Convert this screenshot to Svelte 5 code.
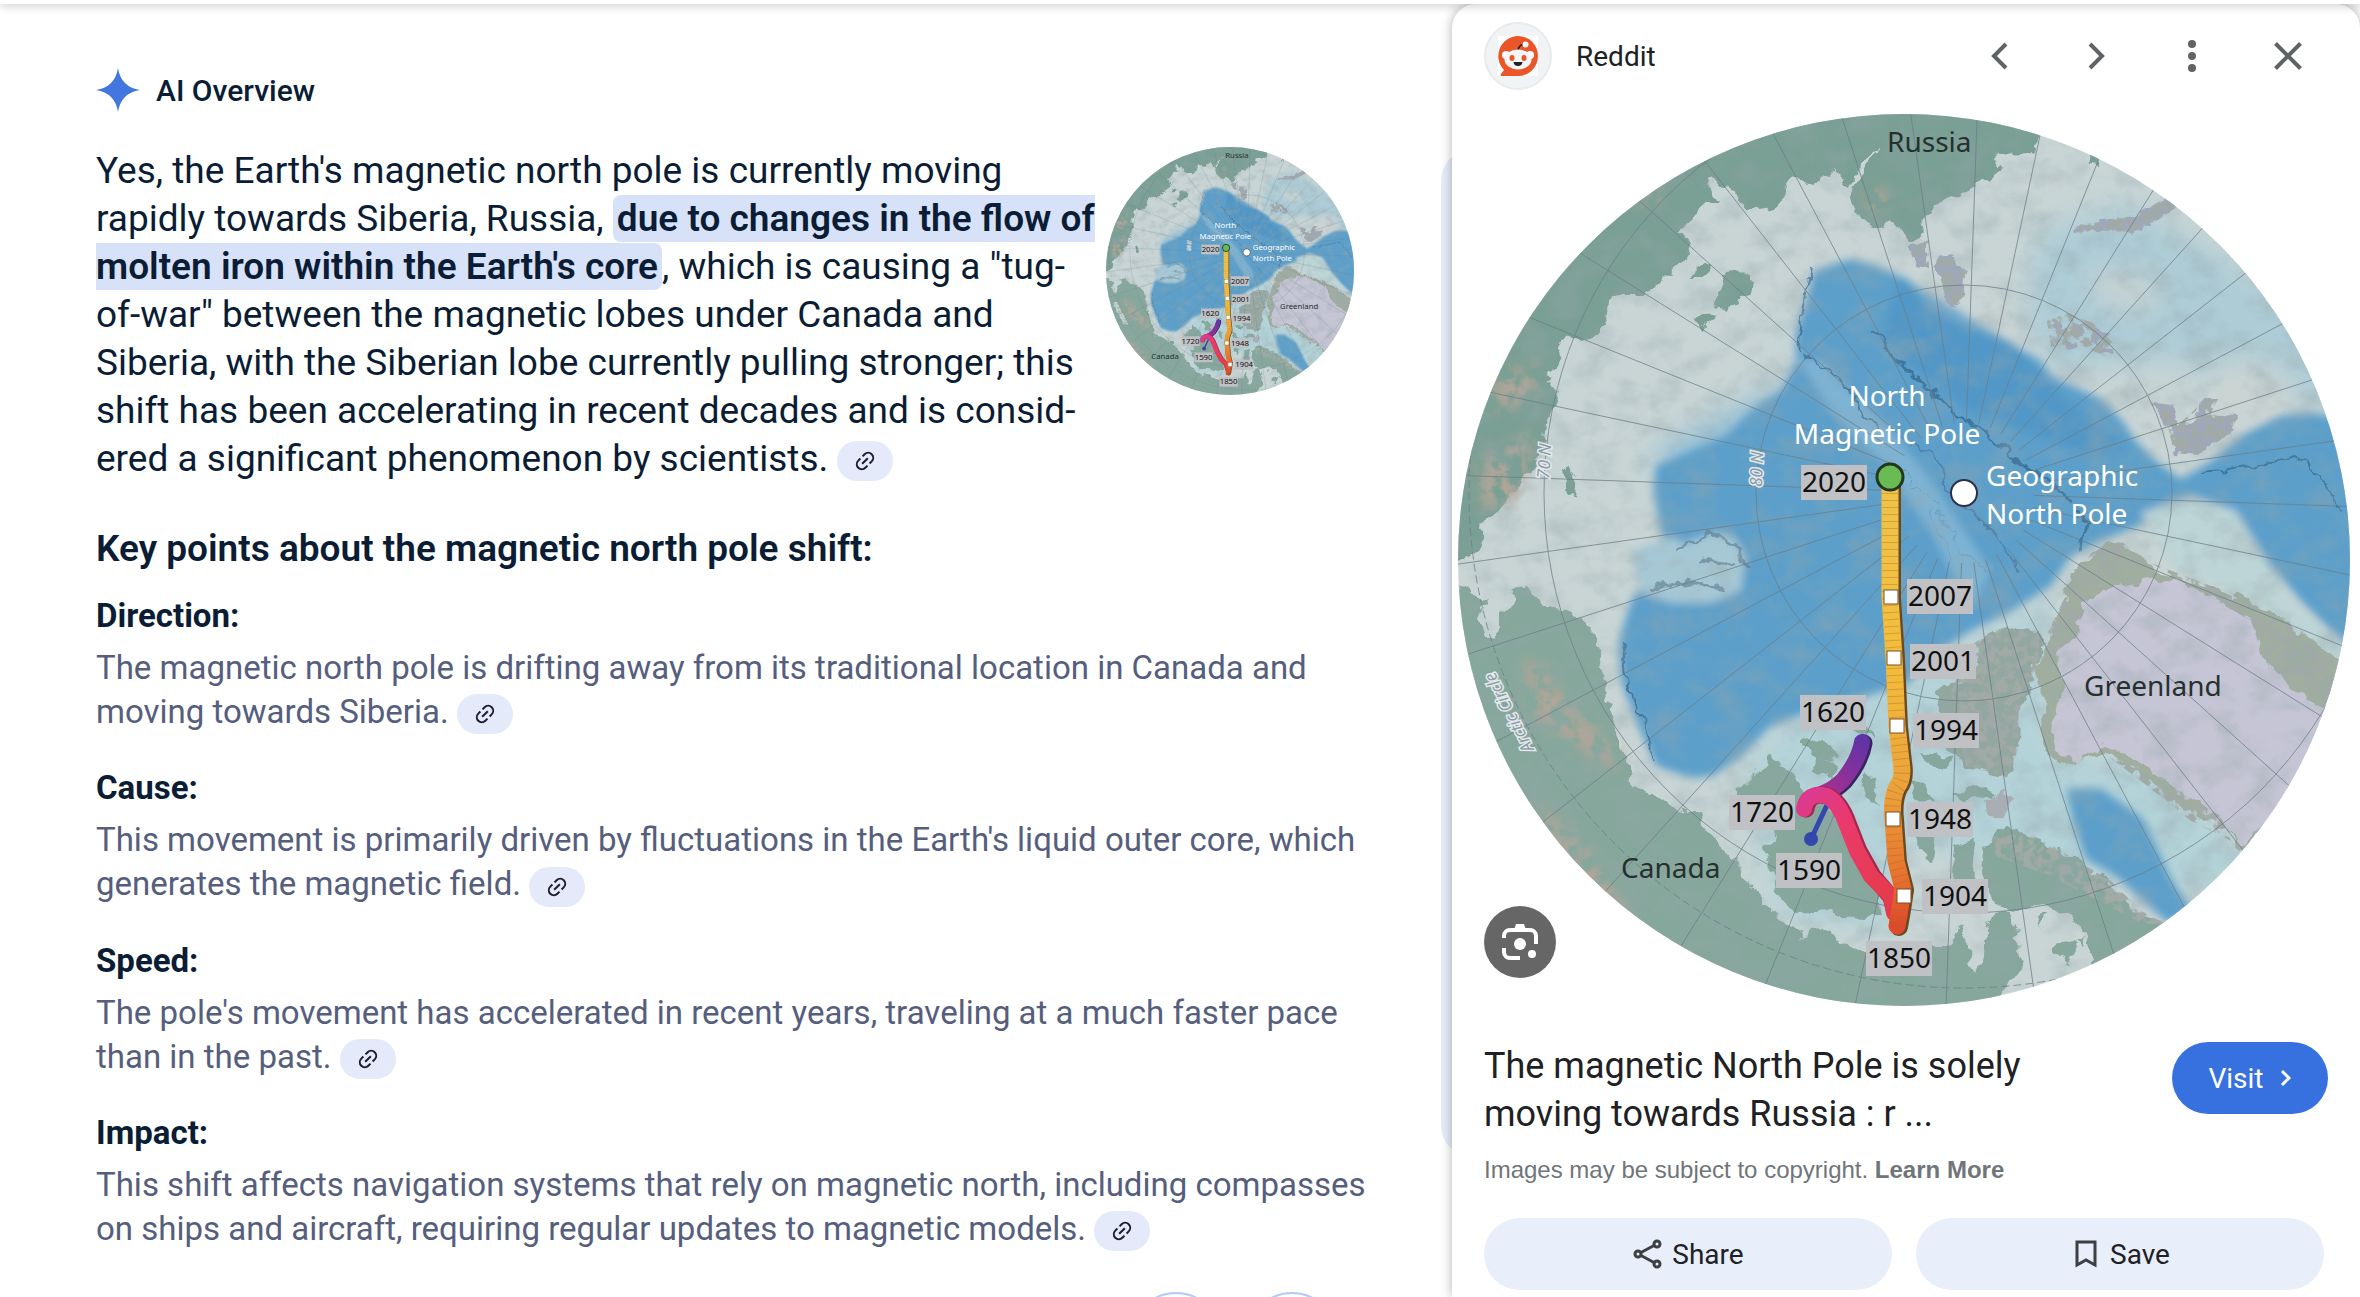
<script lang="ts">
  type Point = { title: string, text: string }

  const points: Point[] = [
    { title: 'Direction:', text: 'The magnetic north pole is drifting away from its traditional location in Canada and moving towards Siberia.' },
    { title: 'Cause:', text: "This movement is primarily driven by fluctuations in the Earth's liquid outer core, which generates the magnetic field." },
    { title: 'Speed:', text: "The pole's movement has accelerated in recent years, traveling at a much faster pace than in the past." },
    { title: 'Impact:', text: 'This shift affects navigation systems that rely on magnetic north, including compasses on ships and aircraft, requiring regular updates to magnetic models.' },
  ]

  // top left corner of each year tag, in map units
  const years = [
    { label: '2020', x: 350, y: 354 },
    { label: '2007', x: 456, y: 468 },
    { label: '2001', x: 459, y: 533 },
    { label: '1994', x: 462, y: 602 },
    { label: '1948', x: 456, y: 691 },
    { label: '1904', x: 471, y: 768 },
    { label: '1850', x: 415, y: 830 },
    { label: '1590', x: 325, y: 742 },
    { label: '1720', x: 278, y: 684 },
    { label: '1620', x: 349, y: 584 },
  ]
  const stops = [[440, 486], [443, 547], [446, 615], [442, 708], [453, 785]]

  const pole = { x: 513, y: 382 }
  const meridians = Array.from({ length: 36 }, (_, i) => {
    const a = ((i * 10 + 2) * Math.PI) / 180
    return {
      x1: pole.x + 70 * Math.cos(a), y1: pole.y + 70 * Math.sin(a),
      x2: pole.x + 620 * Math.cos(a), y2: pole.y + 620 * Math.sin(a),
    }
  })

  const track = 'M439 375V486L443 547L446 615L450 650Q453 668 446 676Q440 688 442 708L445 750L452 778L449 798L446 815'
</script>

{#snippet cite()}
  <button class="cite" aria-label="Show sources">
    <svg viewBox="0 0 24 24" width="24" height="24" fill="none" stroke="currentColor" stroke-width="2">
      <g transform="rotate(-45 12 12)">
        <path d="M10.500 7H7.500a5 5 0 0 0 0 10h3M13.500 7h3a5 5 0 0 1 0 10h-3M8 12h8" />
      </g>
    </svg>
  </button>
{/snippet}

<div class="page">
  <div class="topbar"></div>

  <main>
    <div class="brand">
      <svg viewBox="0 0 44 44" width="44" height="44" fill="#4377e0"><path d="M22 0Q25 19 44 22Q25 25 22 44Q19 25 0 22Q19 19 22 0Z" /></svg>
      <span>AI Overview</span>
    </div>

    <div class="summary">
      <p>
        Yes, the Earth's magnetic north pole is currently moving<br>
        rapidly towards Siberia, Russia, <mark>due to changes in the flow of<br>molten iron within the Earth's core</mark>, which is causing a "tug-<br>of-war" between the magnetic lobes under Canada and<br>
        Siberia, with the Siberian lobe currently pulling stronger; this<br>
        shift has been accelerating in recent decades and is consid-<br>ered a significant phenomenon by scientists.
        {@render cite()}
      </p>
      <svg class="thumb" viewBox="7 3 892 892" role="img" aria-label="Map of the pole track"><use href="#polar-map" /></svg>
    </div>

    <h2>Key points about the magnetic north pole shift:</h2>
    {#each points as p (p.title)}
      <section>
        <h3>{p.title}</h3>
        <p>{p.text} {@render cite()}</p>
      </section>
    {/each}

    <div class="feedback">
      <button aria-label="Good response"></button>
      <button aria-label="Bad response"></button>
    </div>
  </main>

  <div class="side">
    <div class="card-edge"></div>
    <aside>
      <header>
        <span class="logo">
          <svg viewBox="0 0 40 40" width="40" height="40">
            <rect width="40" height="40" fill="#fff" />
            <path d="M20 0a20 20 0 1 1 0 40H3q-1-1 0-2l3-4A20 20 0 0 1 20 0Z" fill="#ec5528" />
            <path d="M20 14q1-5 6-6" fill="none" stroke="#222" stroke-width="1.500" />
            <circle cx="27.500" cy="8.500" r="3" fill="#fff" />
            <circle cx="8" cy="19" r="4" fill="#fff" />
            <circle cx="32" cy="19" r="4" fill="#fff" />
            <ellipse cx="20" cy="23.500" rx="13.500" ry="10" fill="#f4f6f8" />
            <ellipse cx="14" cy="22" rx="2.500" ry="3" fill="#ec5528" />
            <ellipse cx="26" cy="22" rx="2.500" ry="3" fill="#ec5528" />
            <path d="M15.500 26h9q-.5 4-4.500 4t-4.500-4Z" fill="#1b2226" />
          </svg>
        </span>
        <span class="site">Reddit</span>
        <nav>
          <button aria-label="Previous image">
            <svg viewBox="0 0 48 48" width="48" height="48"><path d="M30 12L18 24L30 36" /></svg>
          </button>
          <button aria-label="Next image">
            <svg viewBox="0 0 48 48" width="48" height="48"><path d="M18 12L30 24L18 36" /></svg>
          </button>
          <button aria-label="More actions">
            <svg class="dots" viewBox="0 0 48 48" width="48" height="48"><circle cx="24" cy="12" r="4" /><circle cx="24" cy="24" r="4" /><circle cx="24" cy="36" r="4" /></svg>
          </button>
          <button aria-label="Close">
            <svg viewBox="0 0 48 48" width="48" height="48"><path d="M11.500 11.500L36.500 36.500M36.500 11.500L11.500 36.500" /></svg>
          </button>
        </nav>
      </header>

      <figure>
        <svg class="map" viewBox="7 3 892 892" role="img" aria-label="Map of the magnetic north pole from 1590 to 2020">
          <defs>
            <clipPath id="globe"><circle cx="453" cy="449" r="446" /></clipPath>
            <filter id="coast" x="-5%" y="-5%" width="110%" height="110%">
              <feTurbulence type="fractalNoise" baseFrequency="0.060" numOctaves="3" seed="4" />
              <feDisplacementMap in="SourceGraphic" scale="16" xChannelSelector="R" yChannelSelector="G" />
            </filter>
            <filter id="soft" x="-5%" y="-5%" width="110%" height="110%"><feGaussianBlur stdDeviation="4" /></filter>
            <filter id="haze" x="-10%" y="-10%" width="120%" height="120%"><feGaussianBlur stdDeviation="14" /></filter>
            <filter id="grain" x="0" y="0" width="100%" height="100%">
              <feTurbulence type="fractalNoise" baseFrequency="0.030 0.040" numOctaves="5" seed="9" result="n" />
              <feColorMatrix in="n" values="0 0 0 0 0.300  0 0 0 0 0.380  0 0 0 0 0.400  0.900 0 0 0 -0.380" />
              <feComposite operator="in" in2="SourceGraphic" />
            </filter>
            <filter id="rock" x="-10%" y="-10%" width="120%" height="120%">
              <feTurbulence type="fractalNoise" baseFrequency="0.110" numOctaves="3" seed="2" result="n" />
              <feColorMatrix in="n" values="0 0 0 0 0.360  0 0 0 0 0.400  0 0 0 0 0.380  0 6 0 0 -2.500" />
              <feComposite operator="in" in2="SourceGraphic" />
            </filter>
            <filter id="hills" x="-10%" y="-10%" width="120%" height="120%">
              <feGaussianBlur in="SourceGraphic" stdDeviation="8" result="b" />
              <feTurbulence type="fractalNoise" baseFrequency="0.070" numOctaves="4" seed="6" result="n" />
              <feColorMatrix in="n" values="0 0 0 0 0.450  0 0 0 0 0.380  0 0 0 0 0.310  0 4 0 0 -1.400" />
              <feComposite operator="in" in2="b" />
            </filter>
            <linearGradient id="track" gradientUnits="userSpaceOnUse" x1="0" y1="375" x2="0" y2="815">
              <stop offset="0" stop-color="#efc24a" />
              <stop offset=".4" stop-color="#f3bd3c" />
              <stop offset=".7" stop-color="#eba03a" />
              <stop offset=".88" stop-color="#e8742f" />
              <stop offset="1" stop-color="#dd4a2b" />
            </linearGradient>
            <linearGradient id="old" gradientUnits="userSpaceOnUse" x1="412" y1="630" x2="372" y2="684">
              <stop offset="0" stop-color="#6233a6" />
              <stop offset="1" stop-color="#a8308f" />
            </linearGradient>
            <linearGradient id="mid" gradientUnits="userSpaceOnUse" x1="353" y1="690" x2="442" y2="800">
              <stop offset="0" stop-color="#dc3a8c" />
              <stop offset=".3" stop-color="#ea3a6c" />
              <stop offset="1" stop-color="#e53b47" />
            </linearGradient>
          </defs>

          <g id="polar-map" clip-path="url(#globe)">
            <rect width="910" height="900" fill="#c9d5d5" />
            <g filter="url(#haze)">
              <path d="M590 120L680 90L860 200L900 300L800 290L720 250L600 260L570 200Z" fill="#adccd6" />
              <path d="M290 660L340 600L470 560L600 480L600 640L700 650L860 800L600 760L450 730L440 820L330 810Z" fill="#b3d3d9" />
              <path d="M760 260q40-20 70 0t-10 50h-70zM640 160l70 10-10 30-60-15zM550 180l20 0 0 40-40 0z" fill="#cbd4d3" />
              <path d="M205 340L340 270L350 170L330 330L240 440Z" fill="#8fbdd6" />
            </g>
            <g filter="url(#soft)">
              <path
                d="M363 160L400 148L425 155L455 168L475 195L510 215L555 230L590 250L600 265L650 288L670 308L685 330L705 350L730 368L760 350L790 325L830 305L860 302L910 310V545L880 520L850 490L820 455L800 430L785 405L750 398L700 410L650 430L620 445L600 475L560 500L520 520L480 545L458 572L400 590L360 600L320 615L290 645L262 665L240 667L205 655L185 610L170 570L168 530L180 490L195 470L220 450L210 420L203 380L205 355L240 340L275 325L300 300L330 280L345 250L345 220L355 190Z"
                fill="#5b9fca"
              />
              <path d="M616 678L650 678L675 695L692 708L705 735L720 768L742 800L717 812L690 788L665 765L635 748L622 710Z" fill="#5b9fca" />
              <path d="M345 245L370 250L400 280L440 320L480 370L500 400L540 460L520 500L480 420L430 350L380 300Z" fill="#86b8d6" opacity=".8" />
              <path d="M450 165L560 232L610 285L680 340L640 345L520 300L430 230Z" fill="#4d94c6" opacity=".7" />
              <path d="M180 440L222 425L232 433L262 421L282 425L295 445L290 480L260 492L220 492L190 482Z" fill="#a6c8d5" />
              <path d="M690 402L740 385L785 400L815 450L840 490L900 540L880 560L800 490L720 455Z" fill="#bdd5d7" />
            </g>
            <g filter="url(#coast)" fill="none" stroke="#2f6187" opacity=".65">
              <path d="M425 218L440 240L460 262L485 285L515 310L540 325L560 345L590 365L620 392" stroke-width="3" />
              <path d="M460 330L485 345L495 375L525 405L550 430L570 460" stroke-width="2" stroke="#4b6f93" />
              <path d="M440 350L480 390L520 450L560 480M480 400L500 450M530 420L560 465M460 440L480 500" stroke="#6c94b3" />
              <path d="M750 362L800 356L845 345L870 365L890 400" stroke-width="2" />
              <path d="M350 245L390 265L410 300L430 322" stroke-width="2" />
              <path d="M225 438L262 422L285 435L295 460M200 478L240 470L275 480M250 450L285 455" stroke-width="3" stroke="#5f7f93" />
              <path d="M170 530L175 570L190 610L205 650M360 160L352 200L347 240" stroke-width="2" />
              <path d="M620 400L640 410L625 440" stroke-width="3" />
            </g>

            <g filter="url(#coast)">
              <path
                d="M590 0L584 42L548 43L543 52L552 58L540 65L525 77L500 87L484 95L476 105L468 122L460 132L455 128L446 112L440 108L432 117L420 117L408 108L402 93L400 85L404 74L410 62L427 36L415 45L406 55L400 70L392 63L385 60L375 68L360 71L345 67L333 72L335 85L325 96L308 100L297 95L287 83L275 78L262 68L257 70L265 92L250 92L244 105L237 114L226 120L233 128L239 140L237 147L228 153L215 165L202 178L190 183L170 183L160 188L157 205L148 222L138 228L122 225L113 230L108 245L98 270L105 285L98 310L93 340L85 350L70 370L55 390L42 405L28 415L33 425L28 440L15 448L-20 465V-20Z"
                fill="#7a9f94"
              />
              <path d="M242 156l12-4 6 6-8 8h-12zM275 165l18-4 10 10-2 12-14 6-10 12-12-4 2-12zM245 208l14-6 6 4-16 12zM112 360l10-3 5 10-3 20-8-4zM395 67l8 2-3 8-6-3zM637 48l10 0 0 7-9-1z" fill="#7a9f94" />
              <path
                d="M-10 465L20 480L33 495L28 508L35 525L42 530L48 515L48 503L58 495L63 478L78 475L83 488L98 495L115 498L132 510L145 525L148 550L155 575L157 600L163 615L172 640L180 665L182 680L210 686L235 700L250 702L252 715L262 725L272 735L283 748L290 765L305 780L313 792L325 805L345 814L350 830L358 820L375 815L385 830L400 838L420 840L440 850L480 835L500 835L510 815L515 830L520 850L525 862L533 845L535 820L545 800L560 805L568 820L565 840L572 850L560 870L540 900H-10Z"
                fill="#86a79c"
              />
              <path d="M320 646L345 660L350 680L385 700L395 735L425 765L432 805L410 812L380 800L345 802L328 790L325 770L312 740L325 725L300 690L286 680Z" fill="#86a79c" />
              <path d="M535 735L545 720L565 718L585 725L600 738L630 750L655 768L670 790L690 807L720 817L690 845L645 855L635 825L610 800L590 792L560 802L540 785L530 760Z" fill="#86a79c" />
              <path d="M350 625l25 5 15 12-10 10-30-14zM365 645l20 10-4 14-20-10zM410 660l15 10 5 25-15-8zM470 640l14 4 18 2-6 12-22-6zM465 720l20 2-4 30-14-12zM505 735l20-6-5 40-18 8zM395 610l20 5 8 12-16-4zM455 670l20 8 6 14-18-6zM500 680l35-5 10 8-30 10z" fill="#86a79c" />
              <path d="M606 832l14-4 4 14-6 10-12-6zM586 806l8-4-4 14zM622 828l10 0-2 6z" fill="#86a79c" />
              <path d="M522 533L545 518L588 520L588 545L578 580L568 600L567 640L555 665L540 662L515 655L490 632L485 580L500 572L528 568Z" fill="#92a79f" />
              <path d="M535 690l15-10 12 12-8 16-18-4z" fill="#a9aeb4" />
              <path
                d="M612 490L622 462L650 436L670 430L690 446L715 465L760 475L800 490L840 515L870 535L910 560L900 640L790 740L770 712L740 700L710 680L680 655L655 642L630 648L610 655L595 640L588 610L597 590L585 570L590 540L605 520Z"
                fill="#9fae9f"
              />
              <path d="M632 492L660 475L700 468L730 472L770 490L805 515L812 548L840 575L885 605L850 680L792 734L760 705L715 670L675 643L650 634L625 650L608 642L600 620L605 600L614 570L602 545L625 525Z" fill="#c6c5d5" />
            </g>

            <g filter="url(#coast)" fill="#9fa8bb">
              <path d="M622 121l8-8 30-3 30-8 35-22 15 6-40 28-20 7-40-2-12 5z" />
              <path d="M458 137l20-8 0 28-14-4zM484 149l16-2 14 16-1 22-10 10-12-22z" />
              <path d="M702 292l18 2 5 22 30-12 32 2-10 18-30 20-24-2-6-26zM742 304l14-16 8 2-14 20z" />
              <path d="M600 214l8-4 6 6-8 6zM618 212l12 0 4 10-12 4zM640 220l14 2-2 10-12-2zM612 230l14-2 2 8-12 4zM644 238l14-2 2 10zM630 228l8 2-2 8z" />
            </g>
            <g filter="url(#rock)">
              <path d="M622 121l8-8 30-3 30-8 35-22 15 6-40 28-20 7-40-2-12 5z" />
              <path d="M458 137l20-8 0 28-14-4zM484 149l16-2 14 16-1 22-10 10-12-22zM596 210l20-8 26 10 20 20-6 14-32-14-24 4z" />
              <path d="M522 533L545 518L588 520L588 545L568 600L567 640L555 665L515 655L500 580ZM612 490L640 442L670 430L690 446L640 480L625 525L600 545L588 540ZM700 452L760 475L840 515L880 550L890 600L840 570L812 545L800 510ZM650 640L710 670L770 705L780 730L740 710L690 670ZM540 722L585 725L660 770L690 800L720 815L690 812L600 765L545 745Z" />
              <path d="M702 292l18 2 5 22 30-28 12 0-8 16 28 2-10 18-30 20-24-2-6-26z" />
            </g>
            <g filter="url(#hills)">
              <path d="M70 545L95 560L125 600L170 640L165 660L110 625L80 600ZM85 690L130 730L185 810L150 800L95 740ZM30 350L85 320L65 390L30 400ZM40 270L90 250L80 290L45 300ZM180 85l30-15-5 25zM412 80l22-2 4 18-20 4z" />
            </g>
            <g filter="url(#grain)"><rect width="910" height="900" /></g>

            <g class="grid">
              {#each meridians as m}
                <line {...m} />
              {/each}
              <circle cx={pole.x} cy={pole.y} r="208" />
              <circle cx={pole.x} cy={pole.y} r="420" />
              <circle cx={pole.x} cy={pole.y} r="495" stroke-dasharray="8 4" />
            </g>

            <g class="grid-label">
              <text transform="translate(98 368) rotate(-86)">70 N</text>
              <text transform="translate(311 376) rotate(-88)">80 N</text>
              <text transform="translate(83 638) rotate(-117)">Arctic Circle</text>
            </g>

            <g fill="none" stroke-linecap="round" stroke-linejoin="round">
              <path d="M392 678L376 694L361 726" stroke="#3348ac" stroke-width="5" />
              <circle cx="360" cy="728" r="7" fill="#3348ac" />
              <path d="M413 632Q410 650 394 670Q384 680 372 684" stroke="#3a2460" stroke-width="17" />
              <path d="M411 631Q408 649 392 669Q382 679 370 683" stroke="url(#old)" stroke-width="16" />
              <path d="M355 698Q358 680 378 685Q390 692 397 712L408 740L422 765L440 786L444 802" stroke="#a3264b" stroke-width="17" />
              <path d="M353 698Q356 680 376 685Q388 692 395 712L406 740L420 765L440 785L443 802" stroke="url(#mid)" stroke-width="16" />
              <path d={track} stroke="#6b4a22" stroke-width="18" transform="translate(2 1)" />
              <path d={track} stroke="url(#track)" stroke-width="17" />
              <path d={track} stroke="#9a6a20" stroke-width="16" stroke-linecap="butt" stroke-dasharray="1 6" opacity=".35" />
            </g>
            {#each stops as [x, y]}
              <rect x={x - 7} y={y - 7} width="14" height="14" fill="#fff" stroke="#7a5327" />
            {/each}
            <circle cx="439" cy="366" r="13" fill="#69bb54" stroke="#23361f" stroke-width="3" />
            <circle cx="513" cy="382" r="13" fill="#fff" stroke="#2b2f4a" stroke-width="2" />

            {#each years as y (y.label)}
              <rect x={y.x} y={y.y} width="66" height="35" fill="#bfc1c5" />
              <text class="year" x={y.x + 33} y={y.y + 27}>{y.label}</text>
            {/each}

            <g class="place">
              <text x="436" y="41">Russia</text>
              <text x="633" y="585">Greenland</text>
              <text x="170" y="767">Canada</text>
            </g>
            <g class="pole">
              <text x="436" y="295" text-anchor="middle">North</text>
              <text x="436" y="333" text-anchor="middle">Magnetic Pole</text>
              <text x="535" y="375">Geographic</text>
              <text x="535" y="413">North Pole</text>
            </g>
          </g>
        </svg>
        <button class="lens" aria-label="Search inside image">
          <svg viewBox="0 0 36 36" width="36" height="36" fill="none" stroke="#fff" stroke-width="4">
            <path d="M2 14V12a6 6 0 0 1 6-6H28a6 6 0 0 1 6 6V20M2 24v4a6 6 0 0 0 6 6H18" />
            <path d="M12 6l2-6h8l2 6z" fill="#fff" stroke="none" />
            <circle cx="18" cy="20" r="6" fill="#fff" stroke="none" />
            <circle cx="30" cy="30" r="4" fill="#fff" stroke="none" />
          </svg>
        </button>
      </figure>

      <div class="info">
        <div class="title-row">
          <h1>The magnetic North Pole is solely moving towards Russia : r ...</h1>
          <a class="visit" href="#visit">
            Visit
            <svg viewBox="0 0 12 20" width="12" height="20" fill="none" stroke="#fff" stroke-width="3"><path d="M2 3L9 10L2 17" /></svg>
          </a>
        </div>
        <p class="rights">Images may be subject to copyright. <a href="#learn">Learn More</a></p>
        <div class="actions">
          <button>
            <svg viewBox="0 0 32 32" width="32" height="32" fill="none" stroke="currentColor" stroke-width="3">
              <circle cx="25" cy="6" r="3" /><circle cx="6" cy="16" r="3" /><circle cx="25" cy="26" r="3" />
              <path d="M9 14.500L22 7.500M9 17.500L22 24.500" />
            </svg>
            Share
          </button>
          <button>
            <svg viewBox="0 0 32 32" width="32" height="32" fill="none" stroke="currentColor" stroke-width="3"><path d="M7 4H25V27L16 22L7 27Z" /></svg>
            Save
          </button>
        </div>
      </div>
    </aside>
  </div>
</div>

<style>
  :global(body) { background: #fff; overflow: hidden; }
  .page {
    display: flex;
    position: relative;
    height: 100vh;
    overflow: hidden;
    padding-top: 4px;
    box-sizing: border-box;
    font-family: Roboto, "Open Sans", sans-serif;
    color: #0a1d35;
  }
  button { border: 0; margin: 0; padding: 0; background: none; font: inherit; color: inherit; cursor: pointer; }
  a { color: inherit; text-decoration: none; }
  h1, h2, h3, p, figure { margin: 0; }
  svg { display: block; }

  .topbar {
    position: absolute;
    top: 0;
    left: 0;
    right: 0;
    height: 4px;
    background: #fff;
    box-shadow: 0 1px 10px rgba(0, 0, 0, 0.35);
    z-index: 2;
  }

  main { flex: 1; min-width: 0; padding: 64px 72px 0 96px; }
  .brand { display: flex; align-items: center; gap: 16px; height: 44px; font-size: 30px; font-weight: 500; }
  .summary { display: flex; align-items: flex-start; gap: 8px; margin-top: 35px; padding-right: 26px; }
  .summary p { flex: 1; min-width: 0; font-size: 37px; line-height: 48px; }
  mark {
    background: #d7e2f9;
    color: inherit;
    font-weight: 600;
    padding: 2px 4px;
    border-radius: 8px;
  }
  .thumb { flex: none; width: 248px; height: 248px; }
  .cite {
    display: inline-flex;
    align-items: center;
    justify-content: center;
    vertical-align: middle;
    width: 56px;
    height: 40px;
    border-radius: 20px;
    background: #e5eafb;
    color: #1b1f2a;
  }
  h2 { margin: 42px 0 21px; font-size: 37px; line-height: 48px; font-weight: 600; }
  section { margin-bottom: 32px; }
  h3 { font-size: 33px; line-height: 44px; font-weight: 700; }
  section p { margin-top: 8px; font-size: 33px; line-height: 44px; color: #565e7e; }
  .feedback { display: flex; justify-content: flex-end; gap: 24px; margin-top: 41px; padding-right: 42px; }
  .feedback button { width: 92px; height: 92px; border: 2px solid #b3cbf5; border-radius: 50%; }

  .side { position: relative; flex: none; width: 908px; }
  .card-edge {
    position: absolute;
    left: -11px;
    top: 146px;
    width: 60px;
    height: 1006px;
    border-radius: 32px;
    background: #e8edfa;
  }
  aside {
    position: relative;
    min-height: 100%;
    background: #fff;
    border-radius: 24px 24px 0 0;
    box-shadow: 0 0 12px rgba(0, 0, 0, 0.3);
    color: #202124;
  }
  header { display: flex; align-items: center; padding: 18px 48px 24px 32px; }
  .logo {
    display: grid;
    place-items: center;
    width: 64px;
    height: 64px;
    border: 2px solid #e8eaed;
    border-radius: 50%;
    background: #f1f3f4;
  }
  .site { margin-left: 24px; font-size: 28px; }
  nav { display: flex; gap: 48px; margin-left: auto; }
  nav svg { fill: none; stroke: #5f6368; stroke-width: 4; }
  nav .dots { fill: #5f6368; stroke: none; }

  figure { position: relative; padding: 0 10px 0 6px; }
  .map { width: 100%; height: auto; }
  .grid { fill: none; stroke: #6c7c86; stroke-width: 1; opacity: 0.75; }
  .grid-label { font: italic 17px "Noto Sans", sans-serif; fill: #8d9aa8; stroke: #e3eaec; stroke-width: 3px; paint-order: stroke; }
  .year { font: 28px "Noto Sans", sans-serif; fill: #111; text-anchor: middle; }
  .place { font: 28px "Noto Sans", sans-serif; fill: #26302f; }
  .pole { font: 28px "Noto Sans", sans-serif; fill: #fff; }
  .lens {
    position: absolute;
    left: 32px;
    bottom: 28px;
    display: grid;
    place-items: center;
    width: 72px;
    height: 72px;
    border-radius: 50%;
    background: #666;
  }

  .info { padding: 36px 32px 0 32px; }
  .title-row { display: flex; align-items: flex-start; justify-content: space-between; }
  h1 { flex: 1; max-width: 600px; font-size: 36px; line-height: 48px; font-weight: 400; }
  .visit {
    display: flex;
    align-items: center;
    justify-content: center;
    gap: 16px;
    width: 156px;
    height: 72px;
    border-radius: 36px;
    background: #3771e0;
    color: #fff;
    font-size: 28px;
  }
  .rights { margin-top: 16px; font: 24px/32px "Liberation Sans", Arial, sans-serif; color: #70757a; }
  .rights a { font-weight: 700; }
  .actions { display: flex; gap: 24px; margin-top: 32px; padding-right: 4px; }
  .actions button {
    flex: 1;
    display: flex;
    align-items: center;
    justify-content: center;
    gap: 8px;
    height: 72px;
    border-radius: 36px;
    background: #e8eefa;
    font-size: 28px;
  }
  .actions svg { color: #3c4043; }
</style>
